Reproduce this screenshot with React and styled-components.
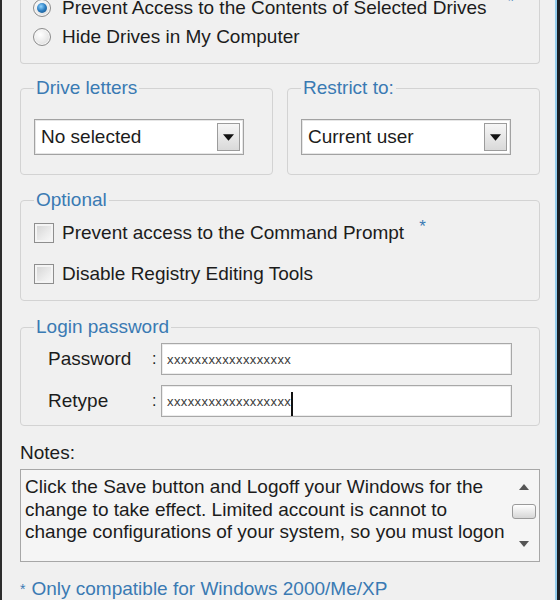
import React from 'react';
import styled, { createGlobalStyle } from 'styled-components';

const GlobalStyle = createGlobalStyle`
  html, body {
    margin: 0;
    padding: 0;
    background: #f0f0f0;
    overflow: hidden;
  }
  * {
    box-sizing: border-box;
  }
`;

const BLUE = '#3a7ab3';
const TEXT = '#1c1c1c';

// window frame (only the sides are in view)
const Frame = styled.div`
  display: flex;
  height: 600px;
  border-left: 2px solid #2c2c2c;
  border-right: 3px solid #1b1f24;
  background: #f0f0f0;
  overflow: hidden;
  font-family: "Liberation Sans", Arial, sans-serif;
  font-size: 19px;
  color: ${TEXT};
`;

const Content = styled.div`
  flex: 1;
  display: flex;
  flex-direction: column;
  padding: 0 15px 0 18px;
  border-right: 2px solid #93cdee;
`;

const TopGroup = styled.div`
  margin-top: -5px;
  padding: 0 14px 13px 12px;
  border: 1px solid #d3d3d3;
  border-top: none;
  border-radius: 0 0 4px 4px;
  display: flex;
  flex-direction: column;
  gap: 3px;
`;

const GroupBox = styled.fieldset`
  margin: ${p => p.$mt || 0}px 0 0 0;
  min-width: 0;
  border: 1px solid #d3d3d3;
  border-radius: 4px;
  padding: ${p => p.$pad || '0 13px'};
`;

const Legend = styled.legend`
  padding: 0 2px;
  line-height: 20px;
  font-size: 19px;
  color: ${BLUE};
`;

const TwoCols = styled.div`
  margin-top: 14px;
  display: grid;
  grid-template-columns: 1fr 1fr;
  gap: 14px;
`;

const OptionRow = styled.label`
  display: flex;
  align-items: center;
  height: 26px;
  gap: ${p => p.$gap || 8}px;
  white-space: nowrap;
`;

const Radio = styled.span`
  position: relative;
  flex: none;
  width: 18px;
  height: 18px;
  border-radius: 50%;
  border: 1px solid #8c8c8c;
  background: radial-gradient(circle at 40% 35%, #ffffff 0%, #e9e9e9 55%, #cfcfcf 100%);
  box-shadow: inset 0 0 0 1px #f7f7f7;

  &::after {
    content: '';
    display: ${p => (p.$checked ? 'block' : 'none')};
    position: absolute;
    left: 3px;
    top: 3px;
    width: 10px;
    height: 10px;
    border-radius: 50%;
    background: radial-gradient(circle at 40% 35%, #8fd3ff 0%, #2a7cc0 50%, #174a78 100%);
  }
`;

const Checkbox = styled.span`
  flex: none;
  width: 20px;
  height: 20px;
  border: 1px solid #8e8e8e;
  background: linear-gradient(135deg, #d2d2d2 0%, #ececec 60%, #fafafa 100%);
  box-shadow: inset 0 0 0 2px #f4f4f4;
`;

const Star = styled.span`
  align-self: flex-start;
  margin: -2px 0 0 ${p => p.$ml || 0}px;
  font-size: 17px;
  line-height: 17px;
  color: ${BLUE};
`;

const Combo = styled.div`
  display: flex;
  align-items: center;
  height: 36px;
  padding: 0 3px 0 6px;
  background: #fff;
  border: 1px solid #a2a2a2;
  box-shadow: inset 0 0 0 1px #e6e6e6;
`;

const ComboText = styled.span`
  flex: 1;
`;

const DropButton = styled.span`
  display: flex;
  align-items: center;
  justify-content: center;
  width: 23px;
  height: 28px;
  border: 1px solid #9c9c9c;
  background: linear-gradient(#f6f6f6, #d9d9d9);
`;

const FieldRow = styled.div`
  display: flex;
  align-items: center;
  height: 32px;
  padding-left: 14px;
`;

const FieldLabel = styled.span`
  width: 104px;
`;

const Colon = styled.span`
  width: 9px;
  font-size: 16px;
`;

const InputBox = styled.div`
  flex: 1;
  display: flex;
  align-items: center;
  height: 32px;
  padding-left: 5px;
  background: #fff;
  border: 1px solid #a8a8a8;
  box-shadow: inset 0 0 0 1px #ececec;
`;

const Masked = styled.span`
  font-size: 13px;
  letter-spacing: 0.4px;
  color: #3a3a3a;
`;

const Caret = styled.span`
  width: 2px;
  height: 24px;
  margin-top: 6px;
  background: #111;
`;

const NotesLabel = styled.div`
  margin-top: 16px;
  line-height: 22px;
`;

const NotesBox = styled.div`
  margin-top: 5px;
  height: 100px;
  display: flex;
  background: #f5f5f5;
  border: 1px solid #a7a7a7;
`;

const NotesText = styled.div`
  flex: 1;
  margin-top: 6px;
  padding: 0 6px 0 4px;
  line-height: 22.5px;
`;

const ScrollBar = styled.div`
  width: 25px;
  margin-right: 3px;
  display: flex;
  flex-direction: column;
  align-items: center;
`;

const ScrollArrow = styled.div`
  height: 34px;
  display: flex;
  align-items: center;
  justify-content: center;
`;

const Thumb = styled.div`
  width: 24px;
  height: 15px;
  border: 1px solid #9a9a9a;
  border-radius: 3px;
  background: linear-gradient(#ffffff, #d6d6d6);
`;

const Spacer = styled.div`
  flex: 1;
`;

const Footer = styled.div`
  margin-top: 16px;
  line-height: 22px;
  color: ${BLUE};
  white-space: nowrap;
`;

const FootStar = styled.span`
  font-size: 14px;
  vertical-align: top;
  margin-right: 6px;
`;

const Triangle = ({ up, size = 11, color = '#111' }) => (
  <svg width={size} height={Math.round(size * 0.6)} viewBox="0 0 10 6">
    <path d={up ? 'M0 6 L5 0 L10 6 Z' : 'M0 0 L10 0 L5 6 Z'} fill={color} />
  </svg>
);

const ComboBox = ({ value }) => (
  <Combo>
    <ComboText>{value}</ComboText>
    <DropButton>
      <Triangle />
    </DropButton>
  </Combo>
);

const App = () => {
  return (
    <>
      <GlobalStyle />
      <Frame>
        <Content>
          <TopGroup>
            <OptionRow $gap={11}>
              <Radio $checked />
              Prevent Access to the Contents of Selected Drives
              <Star $ml={10}>*</Star>
            </OptionRow>
            <OptionRow $gap={11}>
              <Radio />
              Hide Drives in My Computer
            </OptionRow>
          </TopGroup>

          <TwoCols>
            <GroupBox $pad="21px 28px 19px 13px">
              <Legend>Drive letters</Legend>
              <ComboBox value="No selected" />
            </GroupBox>
            <GroupBox $pad="21px 28px 19px 13px">
              <Legend>Restrict to:</Legend>
              <ComboBox value="Current user" />
            </GroupBox>
          </TwoCols>

          <GroupBox $mt={15} $pad="10px 13px 13px 13px">
            <Legend>Optional</Legend>
            <OptionRow>
              <Checkbox />
              Prevent access to the Command Prompt
              <Star $ml={7}>*</Star>
            </OptionRow>
            <OptionRow style={{ marginTop: 15 }}>
              <Checkbox />
              Disable Registry Editing Tools
            </OptionRow>
          </GroupBox>

          <GroupBox $mt={16} $pad="6px 27px 8px 13px">
            <Legend>Login password</Legend>
            <FieldRow>
              <FieldLabel>Password</FieldLabel>
              <Colon>:</Colon>
              <InputBox>
                <Masked>xxxxxxxxxxxxxxxxxx</Masked>
              </InputBox>
            </FieldRow>
            <FieldRow style={{ marginTop: 10 }}>
              <FieldLabel>Retype</FieldLabel>
              <Colon>:</Colon>
              <InputBox>
                <Masked>xxxxxxxxxxxxxxxxxx</Masked>
                <Caret />
              </InputBox>
            </FieldRow>
          </GroupBox>

          <NotesLabel>Notes:</NotesLabel>
          <NotesBox>
            <NotesText>
              Click the Save button and Logoff your Windows for the change to take effect.
              Limited account is cannot to change configurations of your system, so you must logon
            </NotesText>
            <ScrollBar>
              <ScrollArrow>
                <Triangle up size={10} color="#555" />
              </ScrollArrow>
              <Thumb />
              <Spacer />
              <ScrollArrow>
                <Triangle size={10} color="#555" />
              </ScrollArrow>
            </ScrollBar>
          </NotesBox>

          <Footer>
            <FootStar>*</FootStar>Only compatible for Windows 2000/Me/XP
          </Footer>
        </Content>
      </Frame>
    </>
  );
};

export default App;
